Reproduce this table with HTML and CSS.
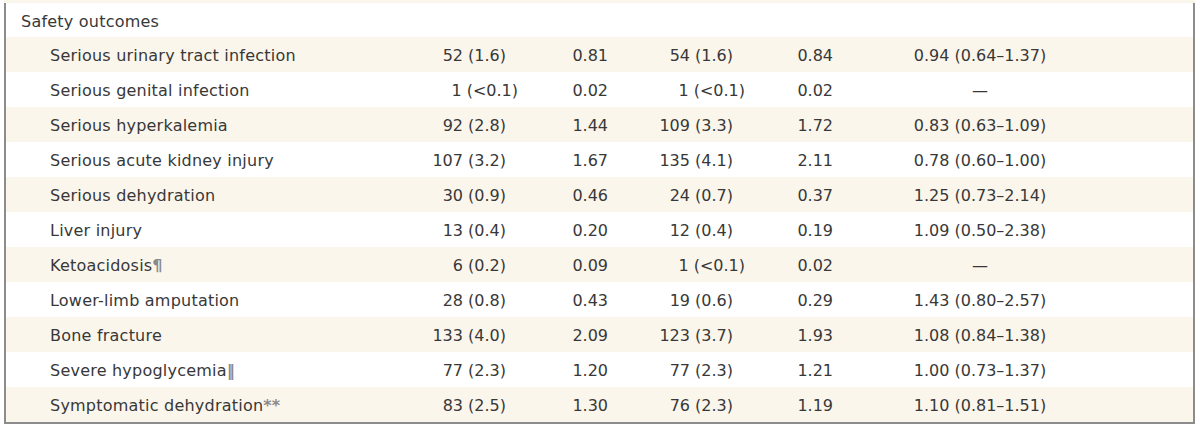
FILE: index.html
```html
<!DOCTYPE html>
<html lang="en">
<head>
<meta charset="utf-8">
<title>Safety outcomes</title>
<link rel="stylesheet" href="styles.css">
</head>
<body>
<div class="top-strip"></div>
<div class="table">
  <div class="row head">
    <div class="label">Safety outcomes</div>
  </div>
  <div class="row alt">
    <div class="label sub">Serious urinary tract infection</div>
    <div class="num">52 (1.6)</div><div class="num">0.81</div><div class="num">54 (1.6)</div><div class="num">0.84</div><div class="ci">0.94 (0.64–1.37)</div>
  </div>
  <div class="row">
    <div class="label sub">Serious genital infection</div>
    <div class="num"><span class="lt">1 (&lt;0.1)</span></div><div class="num">0.02</div><div class="num"><span class="lt">1 (&lt;0.1)</span></div><div class="num">0.02</div><div class="ci">—</div>
  </div>
  <div class="row alt">
    <div class="label sub">Serious hyperkalemia</div>
    <div class="num">92 (2.8)</div><div class="num">1.44</div><div class="num">109 (3.3)</div><div class="num">1.72</div><div class="ci">0.83 (0.63–1.09)</div>
  </div>
  <div class="row">
    <div class="label sub">Serious acute kidney injury</div>
    <div class="num">107 (3.2)</div><div class="num">1.67</div><div class="num">135 (4.1)</div><div class="num">2.11</div><div class="ci">0.78 (0.60–1.00)</div>
  </div>
  <div class="row alt">
    <div class="label sub">Serious dehydration</div>
    <div class="num">30 (0.9)</div><div class="num">0.46</div><div class="num">24 (0.7)</div><div class="num">0.37</div><div class="ci">1.25 (0.73–2.14)</div>
  </div>
  <div class="row">
    <div class="label sub">Liver injury</div>
    <div class="num">13 (0.4)</div><div class="num">0.20</div><div class="num">12 (0.4)</div><div class="num">0.19</div><div class="ci">1.09 (0.50–2.38)</div>
  </div>
  <div class="row alt">
    <div class="label sub">Ketoacidosis<span class="fn">¶</span></div>
    <div class="num">6 (0.2)</div><div class="num">0.09</div><div class="num"><span class="lt">1 (&lt;0.1)</span></div><div class="num">0.02</div><div class="ci">—</div>
  </div>
  <div class="row">
    <div class="label sub">Lower-limb amputation</div>
    <div class="num">28 (0.8)</div><div class="num">0.43</div><div class="num">19 (0.6)</div><div class="num">0.29</div><div class="ci">1.43 (0.80–2.57)</div>
  </div>
  <div class="row alt">
    <div class="label sub">Bone fracture</div>
    <div class="num">133 (4.0)</div><div class="num">2.09</div><div class="num">123 (3.7)</div><div class="num">1.93</div><div class="ci">1.08 (0.84–1.38)</div>
  </div>
  <div class="row">
    <div class="label sub">Severe hypoglycemia<span class="fn">‖</span></div>
    <div class="num">77 (2.3)</div><div class="num">1.20</div><div class="num">77 (2.3)</div><div class="num">1.21</div><div class="ci">1.00 (0.73–1.37)</div>
  </div>
  <div class="row alt">
    <div class="label sub">Symptomatic dehydration<span class="fn">**</span></div>
    <div class="num">83 (2.5)</div><div class="num">1.30</div><div class="num">76 (2.3)</div><div class="num">1.19</div><div class="ci">1.10 (0.81–1.51)</div>
  </div>
</div>
</body>
</html>
```
FILE: styles.css
```css
html, body {
  margin: 0;
  padding: 0;
  background: #ffffff;
}
body {
  font-family: "DejaVu Sans", "Open Sans", sans-serif;
  font-size: 16px;
  color: #383838;
  width: 1200px;
  height: 430px;
  overflow: hidden;
}
.top-strip {
  height: 3px;
  margin-left: 4px;
  width: 1191px;
  background: #fbf6ec;
}
.table {
  margin-left: 4px;
  width: 1187px;
  border-left: 2px solid #8c8c8c;
  border-right: 2px solid #8c8c8c;
  border-bottom: 2px solid #8c8c8c;
}
.row {
  display: grid;
  grid-template-columns: 414px 86px 102px 125px 100px 294px 1fr;
  height: 35px;
  align-items: center;
  padding-top: 2px;
  box-sizing: border-box;
}
.row.head {
  height: 34px;
}
.row.alt {
  background: #fbf6ec;
}
.label {
  padding-left: 15px;
  white-space: nowrap;
  letter-spacing: 0.22px;
}
.label.sub {
  padding-left: 44px;
}
.num {
  text-align: right;
  white-space: nowrap;
}
.ci {
  text-align: center;
  white-space: nowrap;
}
.lt {
  display: inline-block;
  margin-right: -12px;
}
.fn {
  color: #8a8a8a;
  font-weight: 700;
}
```
